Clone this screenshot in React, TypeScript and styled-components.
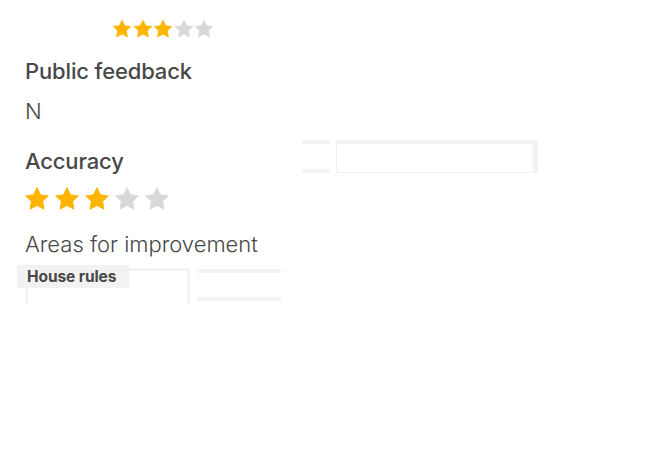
import React, { FC } from 'react';
import styled, { createGlobalStyle } from 'styled-components';

const GlobalStyle = createGlobalStyle`
  html, body {
    margin: 0;
    padding: 0;
    background: #ffffff;
  }
  body {
    font-family: Inter, 'Open Sans', sans-serif;
    color: #484848;
  }
`;

const Page = styled.div`
  width: 647px;
  height: 453px;
  padding: 18px 0 0 25px;
  box-sizing: border-box;
  overflow: hidden;
`;

const StarRow = styled.div<{ $indent?: number; $gap: number }>`
  display: flex;
  gap: ${(p) => p.$gap}px;
  margin-left: ${(p) => p.$indent ?? 0}px;

  svg {
    display: block;
    flex-shrink: 0;
  }
`;

const Heading = styled.h3`
  margin: 0;
  font-size: 22px;
  line-height: 26px;
  font-weight: 500;
  letter-spacing: -0.15px;
`;

const Body = styled.p`
  margin: 0;
  font-size: 22px;
  line-height: 26px;
  font-weight: 300;
`;

const Section = styled.div<{ $top: number }>`
  margin-top: ${(p) => p.$top}px;
`;

const AccuracyRow = styled.div`
  display: flex;
  align-items: flex-start;
`;

const AccuracyMain = styled.div`
  width: 277px;
  flex-shrink: 0;
`;

const GhostGroup = styled.div`
  display: flex;
  gap: 6px;
  margin-top: -8px;
`;

const GhostBars = styled.div<{ $w: number; $h: number; $top?: number }>`
  width: ${(p) => p.$w}px;
  height: ${(p) => p.$h}px;
  margin-top: ${(p) => p.$top ?? 0}px;
  border-top: 4px solid #f3f3f3;
  border-bottom: 4px solid #f3f3f3;
  box-sizing: border-box;
`;

const GhostBox = styled.div`
  width: 202px;
  height: 33px;
  box-sizing: border-box;
  border: 1px solid #f1f1f1;
  border-top: 4px solid #f3f3f3;
  border-right: 5px solid #f3f3f3;
`;

const TagRow = styled.div`
  display: flex;
  gap: 7px;
  margin-top: 11px;
`;

const TagBox = styled.div`
  position: relative;
  width: 165px;
  height: 36px;
  box-sizing: border-box;
  border: 3px solid #f3f3f3;
  border-bottom: none;
`;

const TagLabel = styled.span`
  position: absolute;
  left: -11px;
  top: -6px;
  width: 112px;
  height: 23px;
  padding-left: 10px;
  box-sizing: border-box;
  background: #f2f2f2;
  font-size: 15.5px;
  line-height: 23px;
  font-weight: 700;
  letter-spacing: -0.1px;
  color: #484848;
`;

const Star: FC<{ size: number; on: boolean; tight?: boolean }> = ({ size, on, tight }) => (
  <svg width={size} height={size} viewBox={tight ? '1 1 22 22' : '0 0 24 24'} aria-hidden>
    <path
      d="M12 2.3l2.95 6.1 6.7.95-4.85 4.7 1.15 6.65L12 17.55l-5.95 3.15 1.15-6.65-4.85-4.7 6.7-.95z"
      fill={on ? '#ffb400' : '#d8d8d8'}
      stroke={on ? '#ffb400' : '#d8d8d8'}
      strokeWidth="0.8"
      strokeLinejoin="round"
    />
  </svg>
);

const Stars: FC<{ value: number; size: number; gap: number; indent?: number; tight?: boolean }> = ({
  value,
  size,
  gap,
  indent,
  tight,
}) => (
  <StarRow $gap={gap} $indent={indent}>
    {[0, 1, 2, 3, 4].map((i) => (
      <Star key={i} size={size} on={i < value} tight={tight} />
    ))}
  </StarRow>
);

const App: FC = () => (
  <>
    <GlobalStyle />
    <Page>
      <Section $top={1}>
        <Stars value={3} size={20} gap={0.5} indent={87} tight />
      </Section>
      <Section $top={19}>
        <Heading>Public feedback</Heading>
      </Section>
      <Section $top={14}>
        <Body>N</Body>
      </Section>
      <Section $top={24}>
        <AccuracyRow>
          <AccuracyMain>
            <Heading>Accuracy</Heading>
            <Section $top={11}>
              <Stars value={3} size={28} gap={2} indent={-2} />
            </Section>
          </AccuracyMain>
          <GhostGroup>
            <GhostBars $w={28} $h={33} />
            <GhostBox />
          </GhostGroup>
        </AccuracyRow>
      </Section>
      <Section $top={18}>
        <Body>Areas for improvement</Body>
      </Section>
      <TagRow>
        <TagBox>
          <TagLabel>House rules</TagLabel>
        </TagBox>
        <GhostBars $w={84} $h={32} $top={1} />
      </TagRow>
    </Page>
  </>
);

export default App;
